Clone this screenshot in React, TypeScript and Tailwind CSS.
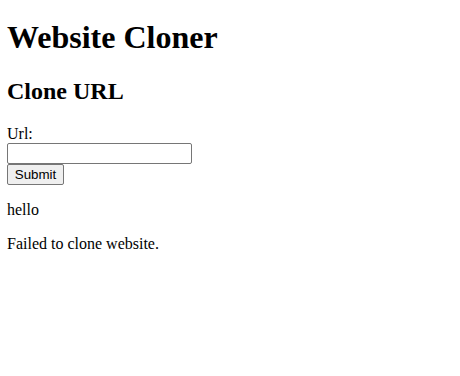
export default function App() {
  return (
    <div className="px-[7px] font-['Liberation_Serif',serif] text-base leading-[normal] text-black bg-white">
      <h1 className="mt-[19.44px] mb-[21.44px] text-[32px] font-bold leading-[normal]">Website Cloner</h1>
      <h2 className="my-[19.92px] text-[24px] font-bold leading-[normal]">Clone URL</h2>
      <form onSubmit={(e) => e.preventDefault()}>
        <label className="block leading-[normal]">Url:</label>
        <input
          type="text"
          className="block w-[185px] h-[21px] border border-[#767676] rounded-[2px] px-[2px] py-[1px] bg-white font-['Liberation_Sans',sans-serif] text-[13.33px] outline-none"
        />
        <button
          type="submit"
          className="block w-[57px] h-[21px] border border-[#767676] rounded-[2px] bg-[#efefef] px-[6px] py-[1px] font-['Liberation_Sans',sans-serif] text-[13.33px] leading-[normal] text-black"
        >
          Submit
        </button>
      </form>
      <p className="my-4">hello</p>
      <p className="my-4">Failed to clone website.</p>
    </div>
  );
}
